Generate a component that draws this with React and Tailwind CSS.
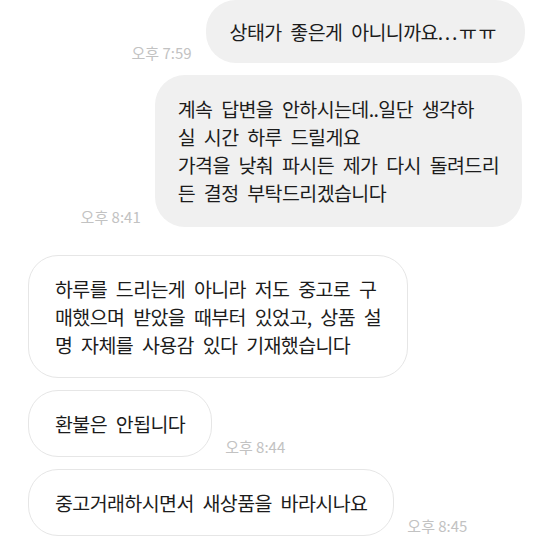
const font = "font-['Noto_Sans_CJK_KR','Noto_Sans',sans-serif]";
const text =
  "text-[19.5px] tracking-[-0.6px] [word-spacing:5px] leading-[28px] text-[#1c1c1c] whitespace-nowrap";

function Time({ children }) {
  return (
    <span className="text-[15px] leading-none tracking-normal [word-spacing:0px] text-[#c2c2c2] whitespace-nowrap mb-[3px]">
      {children}
    </span>
  );
}

function Sent({ time, lines, className = "", pad = "px-[23px] py-[20px]" }) {
  return (
    <div className={`flex items-end justify-end gap-[14px] ${className}`}>
      <Time>{time}</Time>
      <div className={`bg-[#f0f0f0] rounded-[30px] ${pad} ${text}`}>
        {lines.map((l, i) => (
          <div key={i}>{l}</div>
        ))}
      </div>
    </div>
  );
}

function Received({ time, lines, className = "" }) {
  return (
    <div className={`flex items-end gap-[13px] ${className}`}>
      <div
        className={`bg-white border border-[#e6e6e6] rounded-[30px] px-[26px] py-[18.5px] ${text}`}
      >
        {lines.map((l, i) => (
          <div key={i}>{l}</div>
        ))}
      </div>
      {time && <Time>{time}</Time>}
    </div>
  );
}

export default function App() {
  return (
    <div className={`w-[555px] h-[555px] overflow-hidden bg-white ${font}`}>
      <div className="flex flex-col">
        <Sent
          className="pr-[30px]"
          pad="pl-[24px] pr-[27px] py-[17.5px]"
          time="오후 7:59"
          lines={[
            <>
              상태가 좋은게 아니니까요
              <span className="tracking-[1.6px]">...ㅠㅠ</span>
            </>,
          ]}
        />
        <Sent
          className="pr-[33px] mt-[12px]"
          time="오후 8:41"
          lines={[
            "계속 답변을 안하시는데..일단 생각하",
            "실 시간 하루 드릴게요",
            "가격을 낮춰 파시든 제가 다시 돌려드리",
            "든 결정 부탁드리겠습니다",
          ]}
        />
        <div className="pl-[28px] mt-[28px] flex flex-col gap-[12px]">
          <Received
            lines={[
              "하루를 드리는게 아니라 저도 중고로 구",
              "매했으며 받았을 때부터 있었고, 상품 설",
              "명 자체를 사용감 있다 기재했습니다",
            ]}
          />
          <Received time="오후 8:44" lines={["환불은 안됩니다"]} />
          <Received time="오후 8:45" lines={["중고거래하시면서 새상품을 바라시나요"]} />
        </div>
      </div>
    </div>
  );
}
